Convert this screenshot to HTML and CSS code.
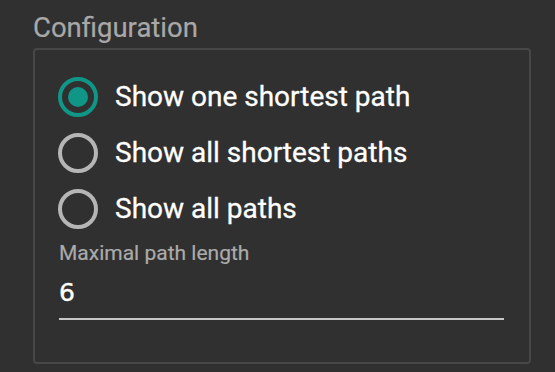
FILE: index.html
```html
<!DOCTYPE html>
<html>
<head>
<meta charset="utf-8">
<link rel="stylesheet" href="styles.css">
</head>
<body>
<div class="panel">
  <div class="title">Configuration</div>
  <div class="box">
    <div class="options">
      <div class="option">
        <span class="radio checked"><span class="dot"></span></span>
        <span class="label">Show one shortest path</span>
      </div>
      <div class="option">
        <span class="radio"></span>
        <span class="label">Show all shortest paths</span>
      </div>
      <div class="option">
        <span class="radio"></span>
        <span class="label">Show all paths</span>
      </div>
    </div>
    <div class="field">
      <div class="field-label">Maximal path length</div>
      <div class="field-input">6</div>
    </div>
  </div>
</div>
</body>
</html>
```

FILE: styles.css
```css
html, body {
  margin: 0;
  padding: 0;
  background: #303030;
  width: 555px;
  height: 372px;
  overflow: hidden;
}

.panel {
  padding-left: 33px;
  font-family: Roboto, "Liberation Sans", sans-serif;
}

.title {
  font-size: 27.5px;
  line-height: 32px;
  color: #a8a8a8;
  padding-top: 12px;
  height: 36px;
  -webkit-text-stroke: 0.2px #a8a8a8;
}

.box {
  border: 2px solid #474747;
  border-radius: 4px;
  padding: 19px 0 0 23px;
  box-sizing: content-box;
  width: 471px;
  height: 293px;
}

.options {
  display: flex;
  flex-direction: column;
}

.option {
  display: flex;
  align-items: center;
  height: 56px;
  gap: 17px;
}

.radio {
  width: 40px;
  height: 40px;
  box-sizing: border-box;
  border: 4px solid #b5b5b5;
  border-radius: 50%;
  display: flex;
  align-items: center;
  justify-content: center;
  flex: none;
}

.radio.checked {
  border-color: #0f9687;
}

.dot {
  width: 20px;
  height: 20px;
  border-radius: 50%;
  background: #0f9687;
}

.label {
  font-size: 28px;
  color: #ffffff;
  line-height: 32px;
  -webkit-text-stroke: 0.3px #ffffff;
}

.field {
  margin-top: 4px;
  margin-left: 1px;
  width: 445px;
}

.field-label {
  font-size: 21px;
  line-height: 24px;
  color: #ababab;
  -webkit-text-stroke: 0.2px #ababab;
}

.field-input {
  font-family: "DejaVu Sans", "Liberation Sans", sans-serif;
  font-size: 25px;
  line-height: 30px;
  color: #ffffff;
  padding-top: 13px;
  height: 40px;
  border-bottom: 2px solid #c6c6c6;
  -webkit-text-stroke: 0.4px #ffffff;
}
```
